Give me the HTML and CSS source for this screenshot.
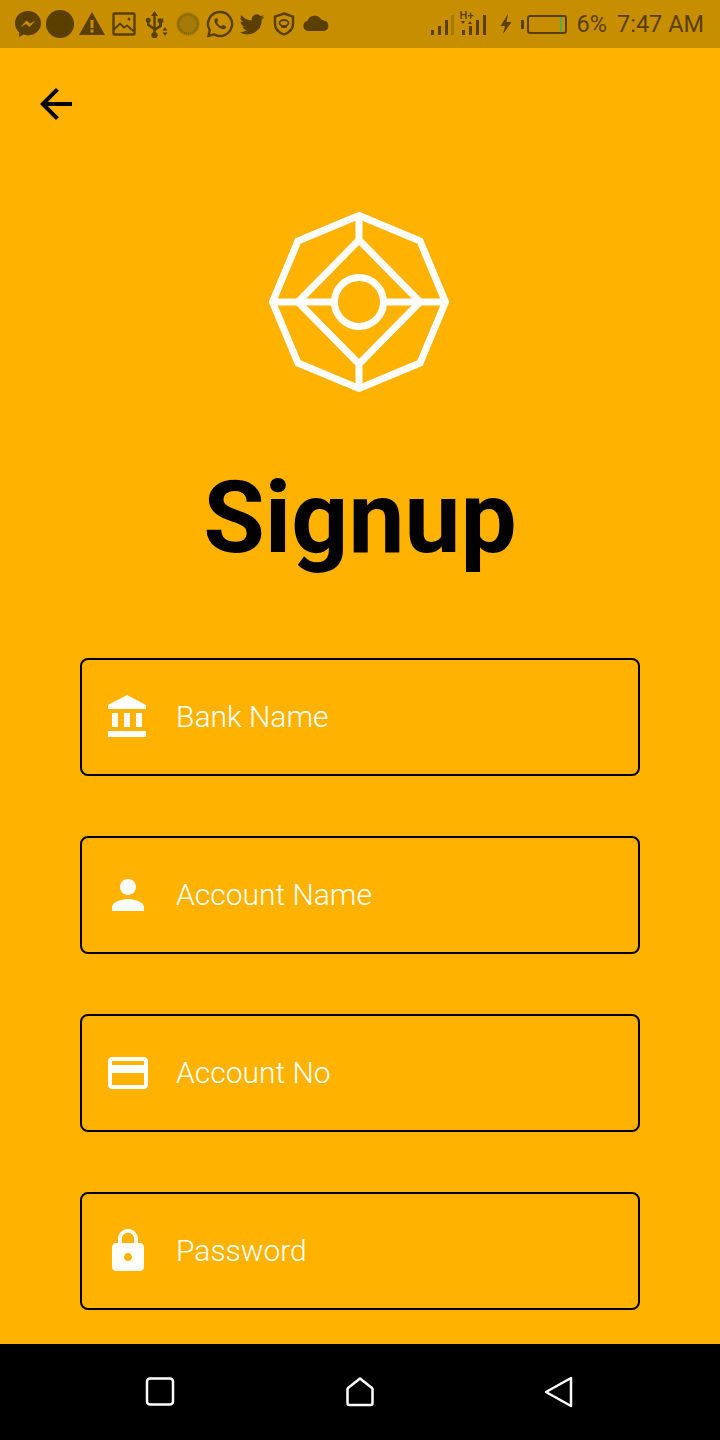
FILE: index.html
```html
<!DOCTYPE html>
<html lang="en">
<head>
  <meta charset="UTF-8">
  <meta name="viewport" content="width=device-width, initial-scale=1.0">
  <title>Signup</title>
  <link rel="stylesheet" href="styles.css">
</head>
<body>
  <div class="status-bar">
    <div class="status-icons">
      <svg class="status-icon" viewBox="0 0 28 28"><path d="M14 1C6.600 1 1 6.400 1 13.300c0 3.700 1.600 6.900 4.200 9.100V27l4.200-2.400c1.400.5 3 .8 4.600.8 7.400 0 13-5.400 13-12.100S21.400 1 14 1z"/><path class="status-cut" d="M6.500 17l6-6.500 3.500 3 5.500-3-6 6.500-3.500-3z"/></svg>
      <svg class="status-icon" viewBox="0 0 28 28"><circle cx="14" cy="14" r="14"/></svg>
      <svg class="status-icon" viewBox="0 0 28 28"><path d="M14 2L1 25h26z"/><path class="status-cut" d="M12.500 10h3v8h-3zM12.500 19.500h3v3h-3z"/></svg>
      <svg class="status-icon" viewBox="0 0 28 28"><rect class="status-line" x="3.500" y="3.500" width="21" height="21" rx="1"/><path class="status-line thin" d="M3.500 20l6.500-6.500 4 4 3-2 7.500 6.500"/><circle cx="19" cy="9" r="1.500"/></svg>
      <svg class="status-icon" viewBox="0 0 28 28"><path d="M12.500 1l3.500 5h-2.300v11.500l3.300-2.300v-2.700h-1.300V8.500h5.600v4h-1.300v3.900l-6.300 4.300v1.500a3.200 3.200 0 1 1-2.400 0v-2.500l-6.300-4.300v-3a2.500 2.500 0 1 1 2.400 0v1.700l3.900 2.700V6H9z"/><path d="M23 17l2.500 3.500h-5zM23 26l-2.500-3.500h5z"/></svg>
      <svg class="status-icon" viewBox="0 0 28 28"><circle class="status-dim" cx="14" cy="14" r="11.500"/><circle class="status-dial" cx="14" cy="14" r="9.500"/></svg>
      <svg class="status-icon" viewBox="0 0 28 28"><path class="status-line" d="M14 2A12 12 0 0 0 3.800 20.300L2.500 25.800l5.600-1.400A12 12 0 1 0 14 2z"/><path d="M10.200 8c-.6 0-1.800 1-1.800 2.800 0 2 1.500 4 3.500 5.800 2 1.700 4 2.700 5.600 2.700 1.500 0 2.800-1.200 2.800-2.300 0-.5-2.800-2-3.300-2-.5 0-1 1.300-1.600 1.300-1 0-4-2.800-4.200-4 0-.6 1-1.100 1-1.700 0-.5-1.400-2.600-2-2.600z"/></svg>
      <svg class="status-icon" viewBox="0 0 24 24"><path d="M22.500 5.900c-.8.300-1.600.6-2.500.7.900-.5 1.600-1.400 1.900-2.400-.8.500-1.800.9-2.700 1a4.300 4.300 0 0 0-7.400 3.900C8.200 8.900 5 7.200 2.900 4.600a4.300 4.300 0 0 0 1.300 5.700c-.7 0-1.400-.2-2-.5 0 2.100 1.500 3.900 3.500 4.300-.6.200-1.300.2-2 .1.600 1.700 2.100 2.900 4 3A8.700 8.700 0 0 1 1.500 19a12.200 12.200 0 0 0 18.800-10.800c.9-.6 1.600-1.400 2.200-2.300z"/></svg>
      <svg class="status-icon" viewBox="0 0 28 28"><path class="status-line" d="M14 3.500l9 3v7.500c0 5-3.700 8.500-9 10.500-5.300-2-9-5.500-9-10.500V6.500z"/><ellipse class="status-line thin" cx="14" cy="13" rx="4.500" ry="3"/><path class="status-line thin" d="M11 17h6"/></svg>
      <svg class="status-icon" viewBox="0 0 28 28"><path d="M6 21a5 5 0 0 1-.5-9.900A7.500 7.500 0 0 1 19.300 9.600 4.500 4.500 0 0 1 21.500 10.500 5.300 5.300 0 0 1 22 21z"/></svg>
    </div>
    <div class="status-right">
      <svg class="signal" viewBox="0 0 26 24"><rect x="1" y="18" width="3" height="5"/><rect x="8" y="14" width="3" height="9"/><rect x="15" y="8" width="3" height="15"/><rect class="status-dim" x="21" y="3" width="3" height="20"/></svg>
      <div class="signal-two">
        <span class="net-label">H+</span>
        <svg class="signal small" viewBox="0 0 28 24"><path d="M1 9l2 3 2-3zM8 12l2-3 2 3z"/><rect x="2" y="18" width="3" height="5"/><rect x="9" y="14" width="3" height="9"/><rect x="16" y="8" width="3" height="15"/><rect x="23" y="3" width="3" height="20"/></svg>
      </div>
      <svg class="bolt" viewBox="0 0 14 24"><path d="M9 2L1.500 14H6l-2 8 8.500-12H7.500z"/></svg>
      <div class="battery">
        <span class="battery-nub"></span>
        <span class="battery-body"><span class="battery-level"></span></span>
      </div>
      <span class="status-text percent">6%</span>
      <span class="status-text">7:47 AM</span>
    </div>
  </div>

  <main class="page">
    <div class="back-btn">
      <svg class="icon" viewBox="0 0 24 24"><path d="M20 11H7.830l5.590-5.590L12 4l-8 8 8 8 1.410-1.410L7.830 13H20v-2z"/></svg>
    </div>

    <svg class="logo" viewBox="0 0 200 200">
      <polygon points="100,13.500 161,39 186.500,100 161,161 100,186.500 39,161 13.500,100 39,39"/>
      <polygon points="100,38 161,100 100,162 39,100"/>
      <path d="M100 13.500V38M100 162v24.500M13.500 100H76M124 100h62.500"/>
      <circle cx="100" cy="100" r="24.500"/>
    </svg>

    <h1 class="title">Signup</h1>

    <form class="form">
      <div class="field">
        <svg class="icon" viewBox="0 0 24 24"><path d="M4 10v7h3v-7H4zm6 0v7h3v-7h-3zM2 22h19v-3H2v3zm14-12v7h3v-7h-3zm-4.500-9L2 6v2h19V6l-9.500-5z"/></svg>
        <span class="field-label">Bank Name</span>
      </div>
      <div class="field">
        <svg class="icon" viewBox="0 0 24 24"><path d="M12 12c2.210 0 4-1.790 4-4s-1.790-4-4-4-4 1.790-4 4 1.790 4 4 4zm0 2c-2.670 0-8 1.340-8 4v2h16v-2c0-2.660-5.330-4-8-4z"/></svg>
        <span class="field-label">Account Name</span>
      </div>
      <div class="field">
        <svg class="icon" viewBox="0 0 24 24"><path d="M20 4H4c-1.110 0-1.990.890-1.990 2L2 18c0 1.110.890 2 2 2h16c1.110 0 2-.890 2-2V6c0-1.110-.890-2-2-2zm0 14H4v-6h16v6zm0-10H4V6h16v2z"/></svg>
        <span class="field-label">Account No</span>
      </div>
      <div class="field">
        <svg class="icon" viewBox="0 0 24 24"><path d="M18 8h-1V6c0-2.760-2.240-5-5-5S7 3.240 7 6v2H6c-1.100 0-2 .900-2 2v10c0 1.100.900 2 2 2h12c1.100 0 2-.900 2-2V10c0-1.100-.900-2-2-2zm-6 9c-1.100 0-2-.900-2-2s.900-2 2-2 2 .900 2 2-.900 2-2 2zm3.100-9H8.900V6c0-1.710 1.390-3.100 3.100-3.100 1.710 0 3.100 1.390 3.100 3.100v2z"/></svg>
        <span class="field-label">Password</span>
      </div>
    </form>
  </main>

  <div class="nav-bar">
    <svg class="nav-icon" viewBox="0 0 32 32"><rect x="3" y="2.500" width="26" height="26" rx="3"/></svg>
    <svg class="nav-icon" viewBox="0 0 32 32"><path d="M16 2.500l12 9.500a1 1 0 0 1 .500 1V27a2 2 0 0 1-2 2h-21a2 2 0 0 1-2-2V13a1 1 0 0 1 .500-1z"/></svg>
    <svg class="nav-icon" viewBox="0 0 32 32"><path d="M27 2v28L2 16z"/></svg>
  </div>
</body>
</html>
```

FILE: styles.css
```css
* {
  margin: 0;
  padding: 0;
  box-sizing: border-box;
}

body {
  font-family: 'Roboto', sans-serif;
  background-color: #ffb300;
  display: flex;
  flex-direction: column;
  height: 100vh;
  overflow: hidden;
}

/* Barra de estado */
.status-bar {
  height: 48px;
  flex-shrink: 0;
  background: #c68e00;
  color: #5a3f00;
  display: flex;
  justify-content: space-between;
  align-items: center;
  padding: 0 16px 0 14px;
}

.status-icons {
  display: flex;
  gap: 4px;
}

.status-icon {
  width: 28px;
  height: 28px;
  fill: #5a3f00;
}

.status-cut {
  fill: #c68e00;
}

.status-line {
  fill: none;
  stroke: #5a3f00;
  stroke-width: 2.4;
}

.status-line.thin {
  stroke-width: 1.8;
}

.status-dim {
  fill: #a67a08;
}

.status-dial {
  fill: none;
  stroke: #7f5f08;
  stroke-width: 2;
  stroke-dasharray: 1 1;
}

.status-right {
  display: flex;
  align-items: center;
}

.signal {
  width: 26px;
  height: 24px;
  fill: #5a3f00;
}

.signal-two {
  width: 28px;
  height: 24px;
  margin-left: 4px;
  position: relative;
}

.signal.small {
  width: 28px;
}

.net-label {
  position: absolute;
  top: -2px;
  left: 0;
  font-size: 11px;
  line-height: 11px;
  font-weight: 500;
}

.bolt {
  width: 14px;
  height: 24px;
  margin-left: 11px;
  fill: #5a3f00;
}

.battery {
  display: flex;
  align-items: center;
  gap: 3px;
  margin-left: 8px;
}

.battery-nub {
  width: 3px;
  height: 9px;
  background: #5a3f00;
}

.battery-body {
  width: 40px;
  height: 19px;
  border: 2px solid #5a3f00;
  border-radius: 3px;
  display: flex;
  justify-content: flex-end;
  padding-right: 3px;
}

.battery-level {
  width: 2px;
  background: #4caf50;
}

.status-text {
  font-size: 23.5px;
  line-height: 48px;
  white-space: nowrap;
}

.percent {
  margin: 0 10px 0 10px;
}

/* Contenido */
.page {
  flex: 1;
  overflow: hidden;
}

.icon {
  display: block;
  width: 48px;
  height: 48px;
  flex-shrink: 0;
}

.back-btn {
  padding: 32px 32px 0;
}

.logo {
  display: block;
  width: 200px;
  height: 200px;
  margin: 74px auto 0;
  transform: translateX(-1px);
  fill: none;
  stroke: #fff;
  stroke-width: 7;
}

.title {
  font-size: 100px;
  font-weight: 700;
  line-height: 118px;
  text-align: center;
  color: #000;
  margin-top: 57px;
}

.form {
  display: flex;
  flex-direction: column;
  gap: 60px;
  padding: 0 80px;
  margin-top: 81px;
}

.field {
  height: 118px;
  border: 2px solid #000;
  border-radius: 8px;
  display: flex;
  align-items: center;
  gap: 24px;
  padding-left: 22px;
}

.field .icon {
  fill: #fff;
}

.field-label {
  font-size: 30px;
  font-weight: 300;
  color: #fff;
  padding-bottom: 2px;
}

/* Barra de navegacion */
.nav-bar {
  height: 96px;
  flex-shrink: 0;
  background: #000;
  display: flex;
  justify-content: center;
  align-items: center;
  gap: 168px;
}

.nav-icon {
  width: 32px;
  height: 32px;
  fill: none;
  stroke: #fff;
  stroke-width: 2.500;
  stroke-linejoin: round;
}
```
